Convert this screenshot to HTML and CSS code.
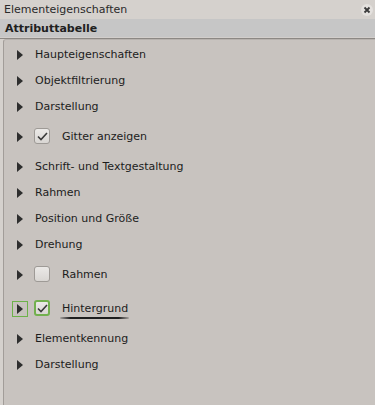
FILE: index.html
```html
<!DOCTYPE html>
<html>
<head>
<meta charset="utf-8">
<link rel="stylesheet" href="styles.css">
</head>
<body>
<div class="window">
  <div class="titlebar">
    <span class="title">Elementeigenschaften</span>
    <span class="close"><svg width="12" height="12" viewBox="0 0 12 12"><circle cx="6" cy="6" r="6" fill="#e4e1de"/><path d="M3.5 3.5 L8.5 8.5 M8.5 3.5 L3.5 8.5" stroke="#3a3a3a" stroke-width="1.8"/></svg></span>
  </div>
  <div class="header">Attributtabelle</div>
  <div class="sep"></div>
  <div class="panel">
    <div class="row"><span class="arrow"></span><span class="label">Haupteigenschaften</span></div>
    <div class="row"><span class="arrow"></span><span class="label">Objektfiltrierung</span></div>
    <div class="row"><span class="arrow"></span><span class="label">Darstellung</span></div>
    <div class="row check-row"><span class="arrow"></span><span class="box checked"><svg width="11" height="9" viewBox="0 0 11 9"><path d="M1 4.5 L4 7.5 L10 1" fill="none" stroke="#3a3a3a" stroke-width="1.6"/></svg></span><span class="label">Gitter anzeigen</span></div>
    <div class="row"><span class="arrow"></span><span class="label">Schrift- und Textgestaltung</span></div>
    <div class="row"><span class="arrow"></span><span class="label">Rahmen</span></div>
    <div class="row"><span class="arrow"></span><span class="label">Position und Größe</span></div>
    <div class="row"><span class="arrow"></span><span class="label">Drehung</span></div>
    <div class="row check-row"><span class="arrow"></span><span class="box"></span><span class="label">Rahmen</span></div>
    <div class="row check-row focus-row"><span class="arrow focus"></span><span class="box checked focus"><svg width="11" height="9" viewBox="0 0 11 9"><path d="M1 4.5 L4 7.5 L10 1" fill="none" stroke="#3a3a3a" stroke-width="1.6"/></svg></span><span class="label underlined">Hintergrund</span></div>
    <div class="row"><span class="arrow"></span><span class="label">Elementkennung</span></div>
    <div class="row"><span class="arrow"></span><span class="label">Darstellung</span></div>
  </div>
</div>
</body>
</html>
```
FILE: styles.css
```css
html, body {
  margin: 0;
  padding: 0;
  width: 375px;
  height: 405px;
  overflow: hidden;
  background: #c8c3bf;
}
.window {
  width: 375px;
  height: 405px;
  display: flex;
  flex-direction: column;
  font-family: "DejaVu Sans", sans-serif;
  font-size: 11px;
  color: #1c1c1c;
  background: #d5d1cd;
}
.titlebar {
  height: 19px;
  display: flex;
  align-items: center;
  justify-content: space-between;
  padding: 0 2px 0 4px;
  background: #d5d1cd;
  font-size: 11px;
  color: #2a2a2a;
}
.close {
  display: flex;
  align-items: center;
}
.header {
  height: 18px;
  display: flex;
  align-items: center;
  padding-left: 5px;
  background: #c6c6c6;
  font-weight: bold;
  font-size: 11px;
  color: #202020;
}
.sep {
  height: 1px;
  background: #d2cecb;
  border-bottom: 1px solid #8c8884;
}
.panel {
  flex: 1;
  margin-left: 3px;
  padding-top: 1px;
  border-left: 1px solid #a29d99;
  border-top: 1px solid #b7b2ae;
  border-top-left-radius: 3px;
  background: #c8c3bf;
}
.row {
  height: 26px;
  display: flex;
  align-items: center;
  padding-left: 13px;
}
.check-row {
  height: 34px;
}
.focus-row {
  height: 34px;
}
.arrow {
  width: 0;
  height: 0;
  border-top: 5px solid transparent;
  border-bottom: 5px solid transparent;
  border-left: 6px solid #2e2e2e;
  margin-right: 12px;
  margin-top: 1px;
}
.arrow.focus {
  position: relative;
}
.arrow.focus::before {
  content: "";
  position: absolute;
  left: -11px;
  top: -8px;
  width: 14px;
  height: 14px;
  border: 1px solid #6db24a;
}
.box {
  width: 14px;
  height: 14px;
  border: 1px solid #9e9a96;
  border-radius: 3px;
  background: linear-gradient(#ebe9e7, #d9d6d3);
  display: flex;
  align-items: center;
  justify-content: center;
  margin-right: 12px;
  margin-left: -1px;
}
.box.focus {
  border: 2px solid #72b04e;
  width: 12px;
  height: 12px;
}
.label {
  white-space: nowrap;
}
.underlined {
  position: relative;
}
.underlined::after {
  content: "";
  position: absolute;
  left: -2px;
  right: -1px;
  bottom: -4px;
  height: 2px;
  background: linear-gradient(90deg, rgba(30,30,30,0.2), #1e1e1e 15%, #1e1e1e 85%, rgba(30,30,30,0.2));
  border-radius: 1px;
}
```
